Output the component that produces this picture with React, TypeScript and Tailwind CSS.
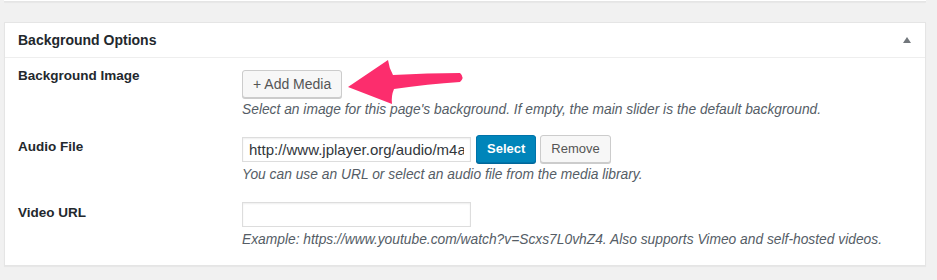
const font = "font-['Liberation_Sans',Arial,sans-serif]";

function Label({ children, className = "" }: { children: React.ReactNode; className?: string }) {
  return (
    <div className={`w-[224px] shrink-0 text-[13.5px] leading-[20px] font-bold text-[#23282d] ${className}`}>
      {children}
    </div>
  );
}

function Description({ children, className = "" }: { children: React.ReactNode; className?: string }) {
  return <p className={`text-[13.8px] leading-[18px] italic text-[#555d66] ${className}`}>{children}</p>;
}

function TextInput({ value = "" }: { value?: string }) {
  return (
    <input
      type="text"
      defaultValue={value}
      className="h-[25px] w-[229px] border border-[#ddd] bg-white px-[6px] text-[15px] text-[#32373c] shadow-[inset_0_1px_2px_rgba(0,0,0,0.07)] outline-none"
    />
  );
}

export default function App() {
  return (
    <div className={`relative h-[280px] w-full overflow-hidden bg-[#f1f1f1] ${font}`}>
      {/* previous box, cut off at the top */}
      <div className="ml-[4px] h-[2px] w-[922px] border-b border-[#e5e5e5] bg-white shadow-[0_1px_1px_rgba(0,0,0,0.04)]" />

      {/* Background Options postbox */}
      <div className="ml-[4px] mt-[20px] w-[922px] border border-[#e5e5e5] bg-white shadow-[0_1px_1px_rgba(0,0,0,0.04)]">
        <div className="flex h-[35px] items-center justify-between border-b border-[#eee] pl-[13px] pr-[14px]">
          <h2 className="text-[14px] font-bold text-[#23282d]">Background Options</h2>
          <span className="h-0 w-0 border-x-[4px] border-b-[6px] border-x-transparent border-b-[#72777c]" />
        </div>

        <div className="pl-[13px] pt-[8px] pb-[16px]">
          {/* Background Image */}
          <div className="flex items-start">
            <Label>Background Image</Label>
            <div className="pt-[4px]">
              <button className="h-[28px] rounded-[3px] border border-[#ccc] bg-[#f7f7f7] px-[10px] text-[14px] text-[#555] shadow-[0_1px_0_#ccc]">
                + Add Media
              </button>
              <Description className="mt-[3px]">
                Select an image for this page's background. If empty, the main slider is the default background.
              </Description>
            </div>
          </div>

          {/* Audio File */}
          <div className="mt-[16px] flex items-start">
            <Label className="pt-[2px]">Audio File</Label>
            <div>
              <div className="flex h-[28px] items-center gap-[4px]">
                <TextInput value="http://www.jplayer.org/audio/m4a/Miaow-07-Bubble.m4a" />
                <button className="ml-[1px] h-[28px] rounded-[3px] border border-[#0073aa] bg-[#0085ba] px-[10px] text-[13px] font-bold text-white shadow-[0_1px_0_#006799]">
                  Select
                </button>
                <button className="h-[28px] rounded-[3px] border border-[#ccc] bg-[#f7f7f7] px-[10px] text-[13px] text-[#555] shadow-[0_1px_0_#ccc]">
                  Remove
                </button>
              </div>
              <Description className="mt-[3px]">
                You can use an URL or select an audio file from the media library.
              </Description>
            </div>
          </div>

          {/* Video URL */}
          <div className="mt-[18px] flex items-start">
            <Label className="pt-[1px]">Video URL</Label>
            <div>
              <TextInput />
              <Description className="mt-[4px]">
                Example: https://www.youtube.com/watch?v=Scxs7L0vhZ4. Also supports Vimeo and self-hosted videos.
              </Description>
            </div>
          </div>
        </div>
      </div>

      {/* annotation arrow */}
      <svg
        className="pointer-events-none absolute left-[345px] top-[58px]"
        width="122"
        height="50"
        viewBox="345 58 122 50"
      >
        <path
          d="M348 87 L388 60 Q389 68 393 75 Q428 73 460 73 Q465 77.5 460 82 Q428 84 394 89 Q391 96 392 104 Z"
          fill="#fc2d6d"
        />
      </svg>
    </div>
  );
}
